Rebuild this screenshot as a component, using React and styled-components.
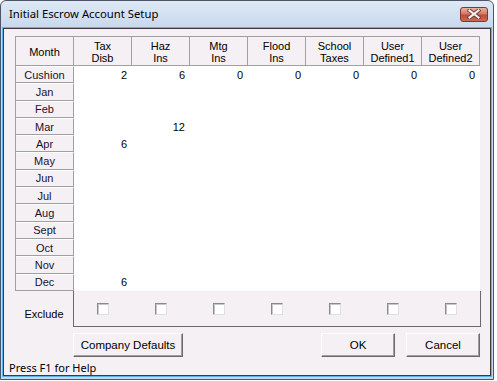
import styled, { createGlobalStyle } from "styled-components"

const GlobalStyle = createGlobalStyle`
  html, body { margin: 0; padding: 0; background: #ffffff; }
  * { box-sizing: border-box; }
`

const months = ["Cushion","Jan","Feb","Mar","Apr","May","Jun","Jul","Aug","Sept","Oct","Nov","Dec"]
const cols = [["Tax","Disb"],["Haz","Ins"],["Mtg","Ins"],["Flood","Ins"],["School","Taxes"],["User","Defined1"],["User","Defined2"]]
const values = {
  Cushion: ["2","6","0","0","0","0","0"],
  Mar: ["","12","","","","",""],
  Apr: ["6","","","","","",""],
  Dec: ["6","","","","","",""],
}

const App = () => {
  return (
    <>
      <GlobalStyle />
      <Window>
        <TitleBar>
          <Title>Initial Escrow Account Setup</Title>
          <CloseButton>
            <svg width="14" height="10" viewBox="0 0 14 10">
              <path d="M2.5 1.5 L11.5 8.5 M11.5 1.5 L2.5 8.5" stroke="#6a3a32" strokeWidth="4" strokeLinecap="square" />
              <path d="M2.5 1.5 L11.5 8.5 M11.5 1.5 L2.5 8.5" stroke="#f4f0f0" strokeWidth="2.2" strokeLinecap="square" />
            </svg>
          </CloseButton>
        </TitleBar>
        <Client>
          <Grid>
            <HeadCell>Month</HeadCell>
            {cols.map((c,i)=>
              <HeadCell key={i}>{c[0]}<br/>{c[1]}</HeadCell>)}
            {months.map((m)=>
              <Row key={m}>
                <MonthCell>{m}</MonthCell>
                {(values[m] || ["","","","","","",""]).map((v,i)=>
                  <DataCell key={i}>{v}</DataCell>)}
              </Row>)}
          </Grid>
          <ExcludeRow>
            <ExcludeLabel>Exclude</ExcludeLabel>
            <ExcludeBox>
              {cols.map((c,i)=>
                <CheckSlot key={i}><Check /></CheckSlot>)}
            </ExcludeBox>
          </ExcludeRow>
          <ButtonRow>
            <Button $w={110}>Company Defaults</Button>
            <Spacer />
            <Button $w={74}>OK</Button>
            <Button $w={74}>Cancel</Button>
          </ButtonRow>
          <Status>Press F1 for Help</Status>
        </Client>
      </Window>
    </>
  )
}

export default App

const Window = styled.div`
  width: 494px;
  height: 380px;
  border: 1px solid #4a5668;
  border-radius: 6px 6px 0 0;
  background: linear-gradient(#dfe9f5, #c6d8ed 28px, #c6d8ed);
  display: flex;
  flex-direction: column;
  padding: 0 2px 3px 2px;
`

const TitleBar = styled.div`
  height: 27px;
  display: flex;
  align-items: center;
  justify-content: space-between;
  padding: 0 3px 2px 6px;
`

const Title = styled.div`
  font-family: "Noto Sans", "Open Sans", sans-serif;
  font-size: 11.3px;
  color: #000;
`

const CloseButton = styled.div`
  width: 28px;
  height: 15px;
  margin-top: 1px;
  border: 1px solid #7a3a30;
  border-radius: 3px;
  background: linear-gradient(#eab0a2, #d47a66 45%, #bf4c36 55%, #cf6a52);
  display: flex;
  align-items: center;
  justify-content: center;
`

const Client = styled.div`
  flex: 1;
  background: #f4f0f4;
  border: 1px solid #3c3c3c;
  box-shadow: 0 0 0 1px #5ab4e8;
  display: flex;
  flex-direction: column;
  padding: 7px 0 0 11px;
  font-family: "Liberation Sans", Arial, sans-serif;
  font-size: 11px;
  color: #000;
`

const Grid = styled.div`
  display: grid;
  grid-template-columns: repeat(8, 58px);
  grid-template-rows: 29px;
  grid-auto-rows: 17.3px;
  width: 465px;
  border-top: 1px solid #a0a0a0;
  border-left: 1px solid #a0a0a0;
  background: #ffffff;
`

const Row = styled.div`
  display: contents;
`

const HeadCell = styled.div`
  background: #f4f0f4;
  border-right: 1px solid #a0a0a0;
  border-bottom: 1px solid #a0a0a0;
  display: flex;
  align-items: center;
  justify-content: center;
  text-align: center;
  line-height: 12px;
  padding-top: 1px;
`

const MonthCell = styled.div`
  background: #f4f0f4;
  border-top: 1px solid #ffffff;
  border-right: 1px solid #a0a0a0;
  border-bottom: 1px solid #a0a0a0;
  display: flex;
  align-items: center;
  justify-content: center;
  color: #1c1030;
`

const DataCell = styled.div`
  background: #ffffff;
  display: flex;
  align-items: center;
  justify-content: flex-end;
  padding-right: 5px;
`

const ExcludeRow = styled.div`
  display: flex;
  height: 36px;
`

const ExcludeLabel = styled.div`
  width: 58px;
  display: flex;
  align-items: center;
  justify-content: center;
  padding-top: 11px;
`

const ExcludeBox = styled.div`
  width: 408px;
  border: 1px solid #6a6a6a;
  border-top: none;
  display: grid;
  grid-template-columns: repeat(7, 1fr);
`

const CheckSlot = styled.div`
  display: flex;
  justify-content: center;
  padding-top: 12px;
  padding-right: 1px;
`

const Check = styled.div`
  width: 12px;
  height: 12px;
  background: #ffffff;
  border-top: 1px solid #8a8a8a;
  border-left: 1px solid #8a8a8a;
  border-right: 1px solid #e0e0e0;
  border-bottom: 1px solid #e0e0e0;
  box-shadow: inset 1px 1px 0 #c8c8c8;
`

const ButtonRow = styled.div`
  display: flex;
  gap: 11px;
  margin-top: 6px;
  padding-left: 58px;
  width: 465px;
`

const Spacer = styled.div`
  flex: 1;
`

const Button = styled.button`
  width: ${(props) => props.$w}px;
  height: 24px;
  font-family: "Liberation Sans", Arial, sans-serif;
  font-size: 11.5px;
  color: #000;
  background: #f4f0f4;
  border: 1px solid;
  border-color: #ffffff #6a6a6a #6a6a6a #ffffff;
  box-shadow: inset -1px -1px 0 #a0a0a0;
  padding: 0;
`

const Status = styled.div`
  margin-top: auto;
  margin-left: -6px;
  margin-bottom: 0;
  font-family: "Noto Sans", sans-serif;
  font-size: 11px;
`
